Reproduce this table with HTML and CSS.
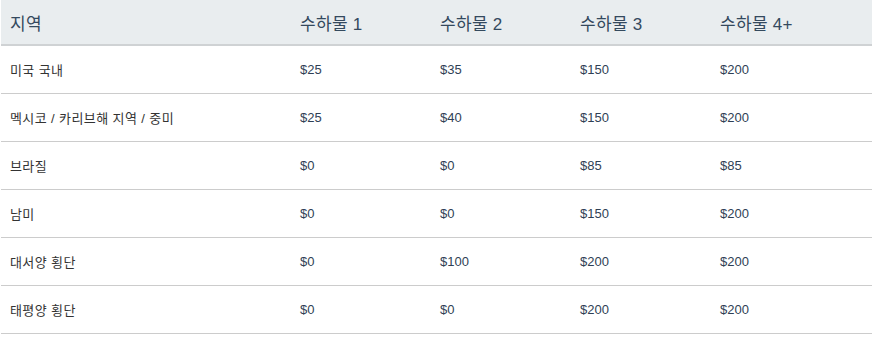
FILE: index.html
```html
<!DOCTYPE html>
<html lang="ko">
<head>
<meta charset="utf-8">
<link rel="stylesheet" href="styles.css">
</head>
<body>
<table class="fees">
  <colgroup>
    <col class="c-region"><col class="c-bag"><col class="c-bag"><col class="c-bag"><col class="c-last">
  </colgroup>
  <thead>
    <tr><th>지역</th><th>수하물 1</th><th>수하물 2</th><th>수하물 3</th><th>수하물 4+</th></tr>
  </thead>
  <tbody>
    <tr><td>미국 국내</td><td>$25</td><td>$35</td><td>$150</td><td>$200</td></tr>
    <tr><td>멕시코 / 카리브해 지역 / 중미</td><td>$25</td><td>$40</td><td>$150</td><td>$200</td></tr>
    <tr><td>브라질</td><td>$0</td><td>$0</td><td>$85</td><td>$85</td></tr>
    <tr><td>남미</td><td>$0</td><td>$0</td><td>$150</td><td>$200</td></tr>
    <tr><td>대서양 횡단</td><td>$0</td><td>$100</td><td>$200</td><td>$200</td></tr>
    <tr><td>태평양 횡단</td><td>$0</td><td>$0</td><td>$200</td><td>$200</td></tr>
  </tbody>
</table>
</body>
</html>
```
FILE: styles.css
```css
html, body { margin: 0; padding: 0; background: #fff; }
body { font-family: "Liberation Sans", Arial, "Noto Sans CJK KR", sans-serif; }
.fees {
  border-collapse: collapse;
  margin-left: 1px;
  width: 871px;
  table-layout: fixed;
}
.c-region { width: 290px; }
.c-bag { width: 140px; }
.fees th, .fees td {
  text-align: left;
  padding: 0 0 0 9px;
  vertical-align: middle;
}
.fees th {
  background: #e9edef;
  height: 44px;
  font-weight: normal;
  font-size: 17px;
  letter-spacing: 0.3px;
  color: #34495e;
  border-bottom: 2px solid #cfd2d4;
}
.fees td {
  height: 47px;
  font-size: 13px;
  color: #333;
  border-bottom: 1px solid #cccccc;
}
.fees td:first-child { font-size: 13px; letter-spacing: 0.4px; }
.fees td:not(:first-child) { color: #2f3f55; }
```
